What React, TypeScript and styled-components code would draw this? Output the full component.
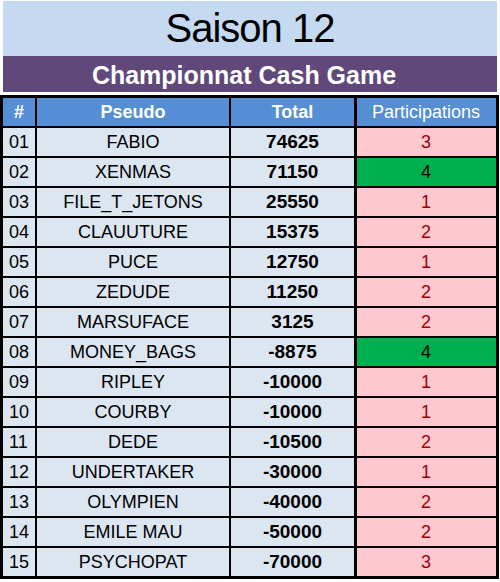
import styled, { createGlobalStyle } from "styled-components";

type Player = {
  rank: string;
  name: string;
  total: number;
  games: number;
};

const players: Player[] = [
  { rank: "01", name: "FABIO", total: 74625, games: 3 },
  { rank: "02", name: "XENMAS", total: 71150, games: 4 },
  { rank: "03", name: "FILE_T_JETONS", total: 25550, games: 1 },
  { rank: "04", name: "CLAUUTURE", total: 15375, games: 2 },
  { rank: "05", name: "PUCE", total: 12750, games: 1 },
  { rank: "06", name: "ZEDUDE", total: 11250, games: 2 },
  { rank: "07", name: "MARSUFACE", total: 3125, games: 2 },
  { rank: "08", name: "MONEY_BAGS", total: -8875, games: 4 },
  { rank: "09", name: "RIPLEY", total: -10000, games: 1 },
  { rank: "10", name: "COURBY", total: -10000, games: 1 },
  { rank: "11", name: "DEDE", total: -10500, games: 2 },
  { rank: "12", name: "UNDERTAKER", total: -30000, games: 1 },
  { rank: "13", name: "OLYMPIEN", total: -40000, games: 2 },
  { rank: "14", name: "EMILE MAU", total: -50000, games: 2 },
  { rank: "15", name: "PSYCHOPAT", total: -70000, games: 3 },
];

// 4 participations = qualifié (vert), sinon rose
const FULL = 4;

const App = () => {
  return (
    <Page>
      <GlobalStyle />
      <Title>Saison 12</Title>
      <Banner>Championnat Cash Game</Banner>
      <Board>
        <colgroup>
          <col style={{ width: 32 }} />
          <col style={{ width: 192 }} />
          <col style={{ width: 123 }} />
          <col style={{ width: 140 }} />
        </colgroup>
        <thead>
          <tr>
            <HeadCell>#</HeadCell>
            <HeadCell>Pseudo</HeadCell>
            <HeadCell>Total</HeadCell>
            <HeadCell $light>Participations</HeadCell>
          </tr>
        </thead>
        <tbody>
          {players.map((p) => (
            <tr key={p.rank}>
              <RankCell>{p.rank}</RankCell>
              <Cell>{p.name}</Cell>
              <TotalCell>{p.total}</TotalCell>
              <GamesCell $full={p.games >= FULL}>{p.games}</GamesCell>
            </tr>
          ))}
        </tbody>
      </Board>
    </Page>
  );
};

const GlobalStyle = createGlobalStyle`
  body {
    margin: 0;
    background: #fff;
    font-family: "Liberation Sans", Arial, sans-serif;
  }
`;

const Page = styled.div`
  width: 500px;
`;

const Title = styled.div`
  margin: 1px 3px 0;
  height: 55px;
  background: #c5d9f1;
  display: flex;
  align-items: center;
  justify-content: center;
  font-size: 40px;
  letter-spacing: -1px;
  color: #000;
`;

const Banner = styled.div`
  margin: 0 3px;
  height: 36px;
  padding: 3px 12px 0 0;
  box-sizing: border-box;
  background: #60497a;
  display: flex;
  align-items: center;
  justify-content: center;
  font-size: 25px;
  font-weight: bold;
  color: #fff;
`;

const Board = styled.table`
  margin-top: 3px;
  width: 499px;
  table-layout: fixed;
  border-collapse: separate;
  border-spacing: 2px;
  border: 1px solid #000;
  background: #000;
  font-size: 18px;
`;

const HeadCell = styled.th<{ $light?: boolean }>`
  height: 28px;
  padding: 0;
  background: #558ed5;
  color: #fff;
  font-weight: ${(p) => (p.$light ? "normal" : "bold")};
  text-align: center;
  ${(p) => (p.$light ? "box-shadow: inset 1px 0 0 #000;" : "")}
`;

const Cell = styled.td`
  height: 28px;
  padding: 0;
  background: #dce6f1;
  color: #000;
  text-align: center;
  white-space: nowrap;
`;

const RankCell = styled(Cell)`
  text-align: left;
  padding-left: 6px;
`;

const TotalCell = styled(Cell)`
  font-size: 19px;
  font-weight: bold;
`;

const GamesCell = styled(Cell)<{ $full: boolean }>`
  background: ${(p) => (p.$full ? "#00b050" : "#ffc7ce")};
  color: ${(p) => (p.$full ? "#000" : "#9c0006")};
  box-shadow: inset 1px 0 0 #000;
`;

export default App;
